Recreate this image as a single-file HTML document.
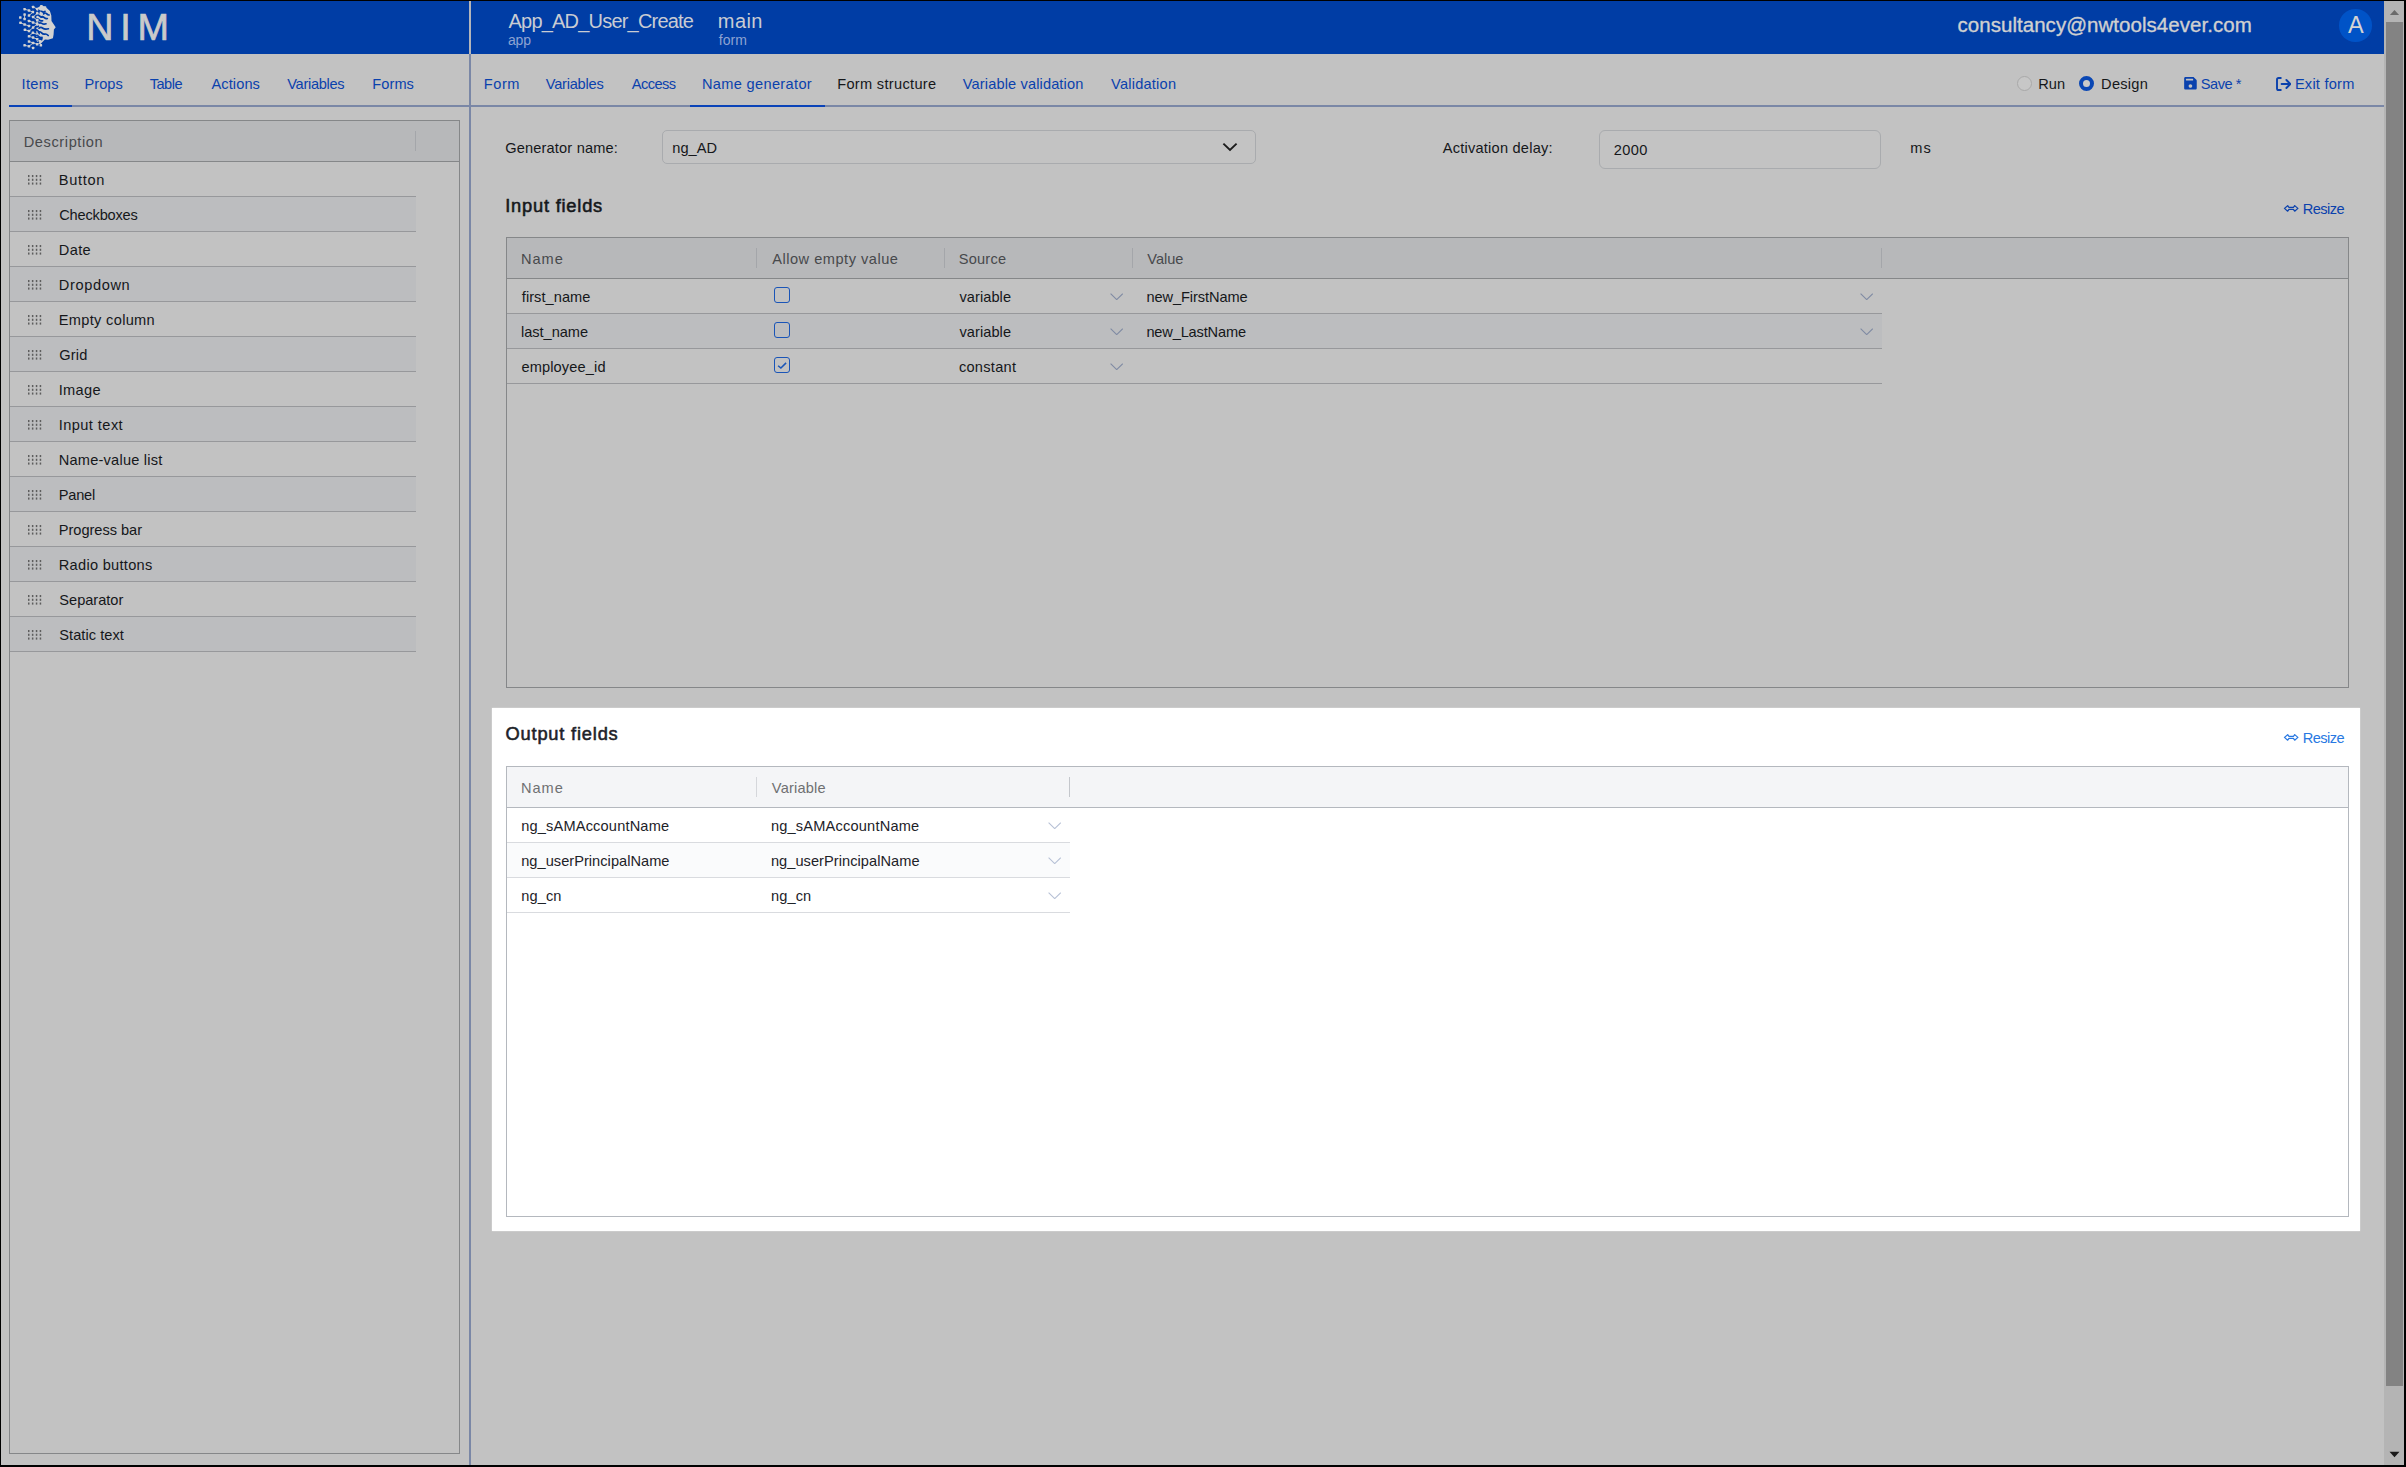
<!DOCTYPE html>
<html lang="en"><head><meta charset="utf-8"><title>NIM - App_AD_User_Create</title>
<style>
html,body{margin:0;padding:0;background:#000;}
body{width:2406px;height:1467px;position:relative;overflow:hidden;font-family:"Liberation Sans", sans-serif;}
.b{position:absolute;display:block;}
.t{position:absolute;white-space:pre;font-family:"Liberation Sans", sans-serif;}
</style></head><body>
<div class="b" style="left:0px;top:0px;width:2406px;height:1467px;background:#000;"></div>
<div class="b" style="left:1px;top:1px;width:2383px;height:1464px;background:#c2c2c2;"></div>
<div class="b" style="left:1px;top:1px;width:2383px;height:53px;background:#003da5;"></div>
<div class="b" style="left:2384px;top:1px;width:20px;height:1464px;background:#b4b4b4;"></div>
<div class="b" style="left:2386px;top:22px;width:17px;height:1364px;background:#838383;"></div>
<svg class="b" style="left:2389px;top:9px" width="11" height="7" viewBox="0 0 11 7"><path d="M0.9 6.0 L5.5 1.0 L10.1 6.0Z" fill="#6a6a6a"/></svg>
<svg class="b" style="left:2389px;top:1451px" width="11" height="7" viewBox="0 0 11 7"><path d="M0.5 0.8 L5.5 6.3 L10.5 0.8Z" fill="#1a1a1a"/></svg>
<div class="b" style="left:469px;top:1px;width:2px;height:53px;background:#b3b5ba;"></div>
<div class="b" style="left:469px;top:54px;width:2px;height:1411px;background:#7a87a6;"></div>
<div class="b" style="left:9px;top:105px;width:2375px;height:2px;background:#7a87a6;"></div>
<div class="b" style="left:9px;top:105px;width:62.5px;height:2.4px;background:#0a43b8;"></div>
<div class="b" style="left:689.5px;top:105px;width:135px;height:2.4px;background:#0a43b8;"></div>
<span class="t" style="left:86.21px;top:17.34px;font-size:37.7px;line-height:20px;color:#cacaca;letter-spacing:6.790px;-webkit-text-stroke:0.7px #cacaca;">NIM</span>
<span class="t" style="left:508.56px;top:10.77px;font-size:20px;line-height:20px;color:#c9ccd3;letter-spacing:-0.798px;">App_AD_User_Create</span>
<span class="t" style="left:508.01px;top:29.75px;font-size:14px;line-height:20px;color:#8da3d2;letter-spacing:-0.188px;">app</span>
<span class="t" style="left:717.87px;top:10.77px;font-size:20px;line-height:20px;color:#c9ccd3;letter-spacing:0.426px;">main</span>
<span class="t" style="left:718.70px;top:29.75px;font-size:14px;line-height:20px;color:#8da3d2;letter-spacing:0.074px;">form</span>
<span class="t" style="left:1957.53px;top:14.80px;font-size:20.5px;line-height:20px;color:#d0d0d0;letter-spacing:0.039px;-webkit-text-stroke:0.35px #d0d0d0;">consultancy@nwtools4ever.com</span>
<div class="b" style="left:2339.3px;top:9.2px;width:32.4px;height:32.4px;background:#0053c7;border-radius:50%;"></div>
<span class="t" style="left:2347.95px;top:15.06px;font-size:23.5px;line-height:20px;color:#d4d4d4;letter-spacing:0.000px;">A</span>
<span class="t" style="left:21.55px;top:73.74px;font-size:14.6px;line-height:20px;color:#0a41ad;letter-spacing:0.345px;">Items</span>
<span class="t" style="left:84.60px;top:73.74px;font-size:14.6px;line-height:20px;color:#0a41ad;letter-spacing:0.021px;">Props</span>
<span class="t" style="left:149.67px;top:73.74px;font-size:14.6px;line-height:20px;color:#0a41ad;letter-spacing:-0.486px;">Table</span>
<span class="t" style="left:211.47px;top:73.74px;font-size:14.6px;line-height:20px;color:#0a41ad;letter-spacing:0.096px;">Actions</span>
<span class="t" style="left:287.24px;top:73.74px;font-size:14.6px;line-height:20px;color:#0a41ad;letter-spacing:-0.297px;">Variables</span>
<span class="t" style="left:372.30px;top:73.74px;font-size:14.6px;line-height:20px;color:#0a41ad;letter-spacing:0.066px;">Forms</span>
<span class="t" style="left:483.80px;top:73.74px;font-size:14.6px;line-height:20px;color:#0a41ad;letter-spacing:0.533px;">Form</span>
<span class="t" style="left:545.74px;top:73.74px;font-size:14.6px;line-height:20px;color:#0a41ad;letter-spacing:-0.222px;">Variables</span>
<span class="t" style="left:631.87px;top:73.74px;font-size:14.6px;line-height:20px;color:#0a41ad;letter-spacing:-0.580px;">Access</span>
<span class="t" style="left:701.90px;top:73.74px;font-size:14.6px;line-height:20px;color:#0a41ad;letter-spacing:0.334px;">Name generator</span>
<span class="t" style="left:962.74px;top:73.74px;font-size:14.6px;line-height:20px;color:#0a41ad;letter-spacing:0.133px;">Variable validation</span>
<span class="t" style="left:1111.04px;top:73.74px;font-size:14.6px;line-height:20px;color:#0a41ad;letter-spacing:0.221px;">Validation</span>
<span class="t" style="left:837.20px;top:73.74px;font-size:14.6px;line-height:20px;color:#15171a;letter-spacing:0.310px;">Form structure</span>
<span class="t" style="left:2038.30px;top:73.74px;font-size:14.6px;line-height:20px;color:#15171a;letter-spacing:0.031px;">Run</span>
<span class="t" style="left:2101.10px;top:73.74px;font-size:14.6px;line-height:20px;color:#15171a;letter-spacing:0.260px;">Design</span>
<span class="t" style="left:2200.84px;top:73.74px;font-size:14.6px;line-height:20px;color:#0a41ad;letter-spacing:-0.485px;">Save *</span>
<span class="t" style="left:2294.90px;top:73.74px;font-size:14.6px;line-height:20px;color:#0a41ad;letter-spacing:0.233px;">Exit form</span>
<div class="b" style="left:2016.8px;top:76.1px;width:15.2px;height:15.2px;border:1px solid #a9a9a9;border-radius:50%;background:#c7c7c7;box-sizing:border-box;"></div>
<div class="b" style="left:2078.9px;top:76.1px;width:15.2px;height:15.2px;border:4.3px solid #0a47b4;border-radius:50%;background:#c9c9c9;box-sizing:border-box;"></div>
<svg class="b" style="left:2183.8px;top:77.3px" width="12.9" height="12.6" viewBox="0 0 448 448"><path fill="#0a41ad" d="M433.9 97.9L350.1 14.1C341.1 5.1 328.9 0 316.1 0H48C21.5 0 0 21.5 0 48v352c0 26.5 21.5 48 48 48h352c26.500 0 48-21.500 48-48V131.900c0-12.700-5.100-24.900-14.100-33.900zM224 384c-35.300 0-64-28.700-64-64s28.700-64 64-64 64 28.700 64 64-28.700 64-64 64zm96-272c0 8.800-7.200 16-16 16H80c-8.800 0-16-7.200-16-16V80c0-8.800 7.200-16 16-16h224c8.800 0 16 7.200 16 16z"/></svg>
<svg class="b" style="left:2275.6px;top:76.6px" width="15.6" height="14" viewBox="0 0 156 140" fill="none" stroke="#0a41ad" stroke-width="19" stroke-linecap="round" stroke-linejoin="round"><path d="M48 10H26Q10 10 10 26V114Q10 130 26 130H48"/><path d="M56 70H142M104 30L144 70L104 110"/></svg>
<div class="b" style="left:9px;top:120px;width:451px;height:1334px;border:1px solid #858789;box-sizing:border-box;"></div>
<div class="b" style="left:10px;top:121px;width:449px;height:40px;background:#b7b8ba;"></div>
<div class="b" style="left:10px;top:161px;width:449px;height:1px;background:#858789;"></div>
<div class="b" style="left:415px;top:131px;width:1px;height:20px;background:#a4a6aa;"></div>
<span class="t" style="left:23.70px;top:131.74px;font-size:14.6px;line-height:20px;color:#47494c;letter-spacing:0.602px;">Description</span>
<div class="b" style="left:10px;top:196px;width:406px;height:1px;background:#97989b;"></div>
<svg class="b" style="left:27.8px;top:175.2px" width="14" height="10" fill="#5e5e5e"><rect x="0.0" y="0.00" width="1.5" height="2.1"/><rect x="0.0" y="3.75" width="1.5" height="2.1"/><rect x="0.0" y="7.50" width="1.5" height="2.1"/><rect x="3.9" y="0.00" width="1.5" height="2.1"/><rect x="3.9" y="3.75" width="1.5" height="2.1"/><rect x="3.9" y="7.50" width="1.5" height="2.1"/><rect x="7.8" y="0.00" width="1.5" height="2.1"/><rect x="7.8" y="3.75" width="1.5" height="2.1"/><rect x="7.8" y="7.50" width="1.5" height="2.1"/><rect x="11.7" y="0.00" width="1.5" height="2.1"/><rect x="11.7" y="3.75" width="1.5" height="2.1"/><rect x="11.7" y="7.50" width="1.5" height="2.1"/></svg>
<span class="t" style="left:58.80px;top:169.94px;font-size:14.6px;line-height:20px;color:#15171a;letter-spacing:0.667px;">Button</span>
<div class="b" style="left:10px;top:197px;width:406px;height:34px;background:#bcbdbf;"></div>
<div class="b" style="left:10px;top:231px;width:406px;height:1px;background:#97989b;"></div>
<svg class="b" style="left:27.8px;top:210.2px" width="14" height="10" fill="#5e5e5e"><rect x="0.0" y="0.00" width="1.5" height="2.1"/><rect x="0.0" y="3.75" width="1.5" height="2.1"/><rect x="0.0" y="7.50" width="1.5" height="2.1"/><rect x="3.9" y="0.00" width="1.5" height="2.1"/><rect x="3.9" y="3.75" width="1.5" height="2.1"/><rect x="3.9" y="7.50" width="1.5" height="2.1"/><rect x="7.8" y="0.00" width="1.5" height="2.1"/><rect x="7.8" y="3.75" width="1.5" height="2.1"/><rect x="7.8" y="7.50" width="1.5" height="2.1"/><rect x="11.7" y="0.00" width="1.5" height="2.1"/><rect x="11.7" y="3.75" width="1.5" height="2.1"/><rect x="11.7" y="7.50" width="1.5" height="2.1"/></svg>
<span class="t" style="left:59.26px;top:204.94px;font-size:14.6px;line-height:20px;color:#15171a;letter-spacing:-0.197px;">Checkboxes</span>
<div class="b" style="left:10px;top:266px;width:406px;height:1px;background:#97989b;"></div>
<svg class="b" style="left:27.8px;top:245.2px" width="14" height="10" fill="#5e5e5e"><rect x="0.0" y="0.00" width="1.5" height="2.1"/><rect x="0.0" y="3.75" width="1.5" height="2.1"/><rect x="0.0" y="7.50" width="1.5" height="2.1"/><rect x="3.9" y="0.00" width="1.5" height="2.1"/><rect x="3.9" y="3.75" width="1.5" height="2.1"/><rect x="3.9" y="7.50" width="1.5" height="2.1"/><rect x="7.8" y="0.00" width="1.5" height="2.1"/><rect x="7.8" y="3.75" width="1.5" height="2.1"/><rect x="7.8" y="7.50" width="1.5" height="2.1"/><rect x="11.7" y="0.00" width="1.5" height="2.1"/><rect x="11.7" y="3.75" width="1.5" height="2.1"/><rect x="11.7" y="7.50" width="1.5" height="2.1"/></svg>
<span class="t" style="left:58.80px;top:239.94px;font-size:14.6px;line-height:20px;color:#15171a;letter-spacing:0.369px;">Date</span>
<div class="b" style="left:10px;top:267px;width:406px;height:34px;background:#bcbdbf;"></div>
<div class="b" style="left:10px;top:301px;width:406px;height:1px;background:#97989b;"></div>
<svg class="b" style="left:27.8px;top:280.2px" width="14" height="10" fill="#5e5e5e"><rect x="0.0" y="0.00" width="1.5" height="2.1"/><rect x="0.0" y="3.75" width="1.5" height="2.1"/><rect x="0.0" y="7.50" width="1.5" height="2.1"/><rect x="3.9" y="0.00" width="1.5" height="2.1"/><rect x="3.9" y="3.75" width="1.5" height="2.1"/><rect x="3.9" y="7.50" width="1.5" height="2.1"/><rect x="7.8" y="0.00" width="1.5" height="2.1"/><rect x="7.8" y="3.75" width="1.5" height="2.1"/><rect x="7.8" y="7.50" width="1.5" height="2.1"/><rect x="11.7" y="0.00" width="1.5" height="2.1"/><rect x="11.7" y="3.75" width="1.5" height="2.1"/><rect x="11.7" y="7.50" width="1.5" height="2.1"/></svg>
<span class="t" style="left:58.80px;top:274.94px;font-size:14.6px;line-height:20px;color:#15171a;letter-spacing:0.628px;">Dropdown</span>
<div class="b" style="left:10px;top:336px;width:406px;height:1px;background:#97989b;"></div>
<svg class="b" style="left:27.8px;top:315.2px" width="14" height="10" fill="#5e5e5e"><rect x="0.0" y="0.00" width="1.5" height="2.1"/><rect x="0.0" y="3.75" width="1.5" height="2.1"/><rect x="0.0" y="7.50" width="1.5" height="2.1"/><rect x="3.9" y="0.00" width="1.5" height="2.1"/><rect x="3.9" y="3.75" width="1.5" height="2.1"/><rect x="3.9" y="7.50" width="1.5" height="2.1"/><rect x="7.8" y="0.00" width="1.5" height="2.1"/><rect x="7.8" y="3.75" width="1.5" height="2.1"/><rect x="7.8" y="7.50" width="1.5" height="2.1"/><rect x="11.7" y="0.00" width="1.5" height="2.1"/><rect x="11.7" y="3.75" width="1.5" height="2.1"/><rect x="11.7" y="7.50" width="1.5" height="2.1"/></svg>
<span class="t" style="left:58.80px;top:309.94px;font-size:14.6px;line-height:20px;color:#15171a;letter-spacing:0.313px;">Empty column</span>
<div class="b" style="left:10px;top:337px;width:406px;height:34px;background:#bcbdbf;"></div>
<div class="b" style="left:10px;top:371px;width:406px;height:1px;background:#97989b;"></div>
<svg class="b" style="left:27.8px;top:350.2px" width="14" height="10" fill="#5e5e5e"><rect x="0.0" y="0.00" width="1.5" height="2.1"/><rect x="0.0" y="3.75" width="1.5" height="2.1"/><rect x="0.0" y="7.50" width="1.5" height="2.1"/><rect x="3.9" y="0.00" width="1.5" height="2.1"/><rect x="3.9" y="3.75" width="1.5" height="2.1"/><rect x="3.9" y="7.50" width="1.5" height="2.1"/><rect x="7.8" y="0.00" width="1.5" height="2.1"/><rect x="7.8" y="3.75" width="1.5" height="2.1"/><rect x="7.8" y="7.50" width="1.5" height="2.1"/><rect x="11.7" y="0.00" width="1.5" height="2.1"/><rect x="11.7" y="3.75" width="1.5" height="2.1"/><rect x="11.7" y="7.50" width="1.5" height="2.1"/></svg>
<span class="t" style="left:59.27px;top:344.94px;font-size:14.6px;line-height:20px;color:#15171a;letter-spacing:0.165px;">Grid</span>
<div class="b" style="left:10px;top:406px;width:406px;height:1px;background:#97989b;"></div>
<svg class="b" style="left:27.8px;top:385.2px" width="14" height="10" fill="#5e5e5e"><rect x="0.0" y="0.00" width="1.5" height="2.1"/><rect x="0.0" y="3.75" width="1.5" height="2.1"/><rect x="0.0" y="7.50" width="1.5" height="2.1"/><rect x="3.9" y="0.00" width="1.5" height="2.1"/><rect x="3.9" y="3.75" width="1.5" height="2.1"/><rect x="3.9" y="7.50" width="1.5" height="2.1"/><rect x="7.8" y="0.00" width="1.5" height="2.1"/><rect x="7.8" y="3.75" width="1.5" height="2.1"/><rect x="7.8" y="7.50" width="1.5" height="2.1"/><rect x="11.7" y="0.00" width="1.5" height="2.1"/><rect x="11.7" y="3.75" width="1.5" height="2.1"/><rect x="11.7" y="7.50" width="1.5" height="2.1"/></svg>
<span class="t" style="left:58.65px;top:379.94px;font-size:14.6px;line-height:20px;color:#15171a;letter-spacing:0.380px;">Image</span>
<div class="b" style="left:10px;top:407px;width:406px;height:34px;background:#bcbdbf;"></div>
<div class="b" style="left:10px;top:441px;width:406px;height:1px;background:#97989b;"></div>
<svg class="b" style="left:27.8px;top:420.2px" width="14" height="10" fill="#5e5e5e"><rect x="0.0" y="0.00" width="1.5" height="2.1"/><rect x="0.0" y="3.75" width="1.5" height="2.1"/><rect x="0.0" y="7.50" width="1.5" height="2.1"/><rect x="3.9" y="0.00" width="1.5" height="2.1"/><rect x="3.9" y="3.75" width="1.5" height="2.1"/><rect x="3.9" y="7.50" width="1.5" height="2.1"/><rect x="7.8" y="0.00" width="1.5" height="2.1"/><rect x="7.8" y="3.75" width="1.5" height="2.1"/><rect x="7.8" y="7.50" width="1.5" height="2.1"/><rect x="11.7" y="0.00" width="1.5" height="2.1"/><rect x="11.7" y="3.75" width="1.5" height="2.1"/><rect x="11.7" y="7.50" width="1.5" height="2.1"/></svg>
<span class="t" style="left:58.65px;top:414.94px;font-size:14.6px;line-height:20px;color:#15171a;letter-spacing:0.444px;">Input text</span>
<div class="b" style="left:10px;top:476px;width:406px;height:1px;background:#97989b;"></div>
<svg class="b" style="left:27.8px;top:455.2px" width="14" height="10" fill="#5e5e5e"><rect x="0.0" y="0.00" width="1.5" height="2.1"/><rect x="0.0" y="3.75" width="1.5" height="2.1"/><rect x="0.0" y="7.50" width="1.5" height="2.1"/><rect x="3.9" y="0.00" width="1.5" height="2.1"/><rect x="3.9" y="3.75" width="1.5" height="2.1"/><rect x="3.9" y="7.50" width="1.5" height="2.1"/><rect x="7.8" y="0.00" width="1.5" height="2.1"/><rect x="7.8" y="3.75" width="1.5" height="2.1"/><rect x="7.8" y="7.50" width="1.5" height="2.1"/><rect x="11.7" y="0.00" width="1.5" height="2.1"/><rect x="11.7" y="3.75" width="1.5" height="2.1"/><rect x="11.7" y="7.50" width="1.5" height="2.1"/></svg>
<span class="t" style="left:58.80px;top:449.94px;font-size:14.6px;line-height:20px;color:#15171a;letter-spacing:0.207px;">Name-value list</span>
<div class="b" style="left:10px;top:477px;width:406px;height:34px;background:#bcbdbf;"></div>
<div class="b" style="left:10px;top:511px;width:406px;height:1px;background:#97989b;"></div>
<svg class="b" style="left:27.8px;top:490.2px" width="14" height="10" fill="#5e5e5e"><rect x="0.0" y="0.00" width="1.5" height="2.1"/><rect x="0.0" y="3.75" width="1.5" height="2.1"/><rect x="0.0" y="7.50" width="1.5" height="2.1"/><rect x="3.9" y="0.00" width="1.5" height="2.1"/><rect x="3.9" y="3.75" width="1.5" height="2.1"/><rect x="3.9" y="7.50" width="1.5" height="2.1"/><rect x="7.8" y="0.00" width="1.5" height="2.1"/><rect x="7.8" y="3.75" width="1.5" height="2.1"/><rect x="7.8" y="7.50" width="1.5" height="2.1"/><rect x="11.7" y="0.00" width="1.5" height="2.1"/><rect x="11.7" y="3.75" width="1.5" height="2.1"/><rect x="11.7" y="7.50" width="1.5" height="2.1"/></svg>
<span class="t" style="left:58.80px;top:484.94px;font-size:14.6px;line-height:20px;color:#15171a;letter-spacing:-0.242px;">Panel</span>
<div class="b" style="left:10px;top:546px;width:406px;height:1px;background:#97989b;"></div>
<svg class="b" style="left:27.8px;top:525.2px" width="14" height="10" fill="#5e5e5e"><rect x="0.0" y="0.00" width="1.5" height="2.1"/><rect x="0.0" y="3.75" width="1.5" height="2.1"/><rect x="0.0" y="7.50" width="1.5" height="2.1"/><rect x="3.9" y="0.00" width="1.5" height="2.1"/><rect x="3.9" y="3.75" width="1.5" height="2.1"/><rect x="3.9" y="7.50" width="1.5" height="2.1"/><rect x="7.8" y="0.00" width="1.5" height="2.1"/><rect x="7.8" y="3.75" width="1.5" height="2.1"/><rect x="7.8" y="7.50" width="1.5" height="2.1"/><rect x="11.7" y="0.00" width="1.5" height="2.1"/><rect x="11.7" y="3.75" width="1.5" height="2.1"/><rect x="11.7" y="7.50" width="1.5" height="2.1"/></svg>
<span class="t" style="left:58.80px;top:519.94px;font-size:14.6px;line-height:20px;color:#15171a;letter-spacing:-0.031px;">Progress bar</span>
<div class="b" style="left:10px;top:547px;width:406px;height:34px;background:#bcbdbf;"></div>
<div class="b" style="left:10px;top:581px;width:406px;height:1px;background:#97989b;"></div>
<svg class="b" style="left:27.8px;top:560.2px" width="14" height="10" fill="#5e5e5e"><rect x="0.0" y="0.00" width="1.5" height="2.1"/><rect x="0.0" y="3.75" width="1.5" height="2.1"/><rect x="0.0" y="7.50" width="1.5" height="2.1"/><rect x="3.9" y="0.00" width="1.5" height="2.1"/><rect x="3.9" y="3.75" width="1.5" height="2.1"/><rect x="3.9" y="7.50" width="1.5" height="2.1"/><rect x="7.8" y="0.00" width="1.5" height="2.1"/><rect x="7.8" y="3.75" width="1.5" height="2.1"/><rect x="7.8" y="7.50" width="1.5" height="2.1"/><rect x="11.7" y="0.00" width="1.5" height="2.1"/><rect x="11.7" y="3.75" width="1.5" height="2.1"/><rect x="11.7" y="7.50" width="1.5" height="2.1"/></svg>
<span class="t" style="left:58.80px;top:554.94px;font-size:14.6px;line-height:20px;color:#15171a;letter-spacing:0.286px;">Radio buttons</span>
<div class="b" style="left:10px;top:616px;width:406px;height:1px;background:#97989b;"></div>
<svg class="b" style="left:27.8px;top:595.2px" width="14" height="10" fill="#5e5e5e"><rect x="0.0" y="0.00" width="1.5" height="2.1"/><rect x="0.0" y="3.75" width="1.5" height="2.1"/><rect x="0.0" y="7.50" width="1.5" height="2.1"/><rect x="3.9" y="0.00" width="1.5" height="2.1"/><rect x="3.9" y="3.75" width="1.5" height="2.1"/><rect x="3.9" y="7.50" width="1.5" height="2.1"/><rect x="7.8" y="0.00" width="1.5" height="2.1"/><rect x="7.8" y="3.75" width="1.5" height="2.1"/><rect x="7.8" y="7.50" width="1.5" height="2.1"/><rect x="11.7" y="0.00" width="1.5" height="2.1"/><rect x="11.7" y="3.75" width="1.5" height="2.1"/><rect x="11.7" y="7.50" width="1.5" height="2.1"/></svg>
<span class="t" style="left:59.34px;top:589.94px;font-size:14.6px;line-height:20px;color:#15171a;letter-spacing:-0.014px;">Separator</span>
<div class="b" style="left:10px;top:617px;width:406px;height:34px;background:#bcbdbf;"></div>
<div class="b" style="left:10px;top:651px;width:406px;height:1px;background:#97989b;"></div>
<svg class="b" style="left:27.8px;top:630.2px" width="14" height="10" fill="#5e5e5e"><rect x="0.0" y="0.00" width="1.5" height="2.1"/><rect x="0.0" y="3.75" width="1.5" height="2.1"/><rect x="0.0" y="7.50" width="1.5" height="2.1"/><rect x="3.9" y="0.00" width="1.5" height="2.1"/><rect x="3.9" y="3.75" width="1.5" height="2.1"/><rect x="3.9" y="7.50" width="1.5" height="2.1"/><rect x="7.8" y="0.00" width="1.5" height="2.1"/><rect x="7.8" y="3.75" width="1.5" height="2.1"/><rect x="7.8" y="7.50" width="1.5" height="2.1"/><rect x="11.7" y="0.00" width="1.5" height="2.1"/><rect x="11.7" y="3.75" width="1.5" height="2.1"/><rect x="11.7" y="7.50" width="1.5" height="2.1"/></svg>
<span class="t" style="left:59.34px;top:624.94px;font-size:14.6px;line-height:20px;color:#15171a;letter-spacing:0.047px;">Static text</span>
<span class="t" style="left:505.17px;top:138.24px;font-size:14.6px;line-height:20px;color:#15171a;letter-spacing:0.171px;">Generator name:</span>
<div class="b" style="left:662px;top:130.3px;width:594px;height:33.4px;border:1px solid #a9abae;border-radius:5px;box-sizing:border-box;background:#c3c3c3;"></div>
<span class="t" style="left:672.23px;top:138.24px;font-size:14.6px;line-height:20px;color:#15171a;letter-spacing:0.057px;">ng_AD</span>
<svg class="b" style="left:1222px;top:142px" width="16" height="10" viewBox="0 0 16 10" fill="none" stroke="#1b1b1b" stroke-width="1.9"><path d="M1.4 1.6 L8 8 L14.6 1.6"/></svg>
<span class="t" style="left:1442.77px;top:137.94px;font-size:14.6px;line-height:20px;color:#15171a;letter-spacing:0.222px;">Activation delay:</span>
<div class="b" style="left:1599px;top:130px;width:282px;height:38.6px;border:1px solid #a9abae;border-radius:6px;box-sizing:border-box;background:#c3c3c3;"></div>
<span class="t" style="left:1613.67px;top:139.64px;font-size:14.6px;line-height:20px;color:#15171a;letter-spacing:0.442px;">2000</span>
<span class="t" style="left:1910.33px;top:137.84px;font-size:14.6px;line-height:20px;color:#15171a;letter-spacing:0.935px;">ms</span>
<span class="t" style="left:505.21px;top:195.66px;font-size:18.3px;line-height:20px;color:#15171a;letter-spacing:0.786px;-webkit-text-stroke:0.55px #15171a;">Input fields</span>
<svg class="b" style="left:2283.3px;top:204.0px" width="16.4" height="8.8" viewBox="0 0 16.4 8.8" fill="none" stroke="#0a41ad" stroke-width="1.25" stroke-linejoin="round"><path d="M1.5 4.4 L4.7 1.6 L6.0 3.5 L10.4 3.5 L11.7 1.6 L14.9 4.4 L11.7 7.2 L10.4 5.3 L6.0 5.3 L4.7 7.2 Z"/></svg>
<span class="t" style="left:2302.70px;top:198.84px;font-size:14.6px;line-height:20px;color:#0a41ad;letter-spacing:-0.536px;">Resize</span>
<div class="b" style="left:506px;top:237px;width:1843px;height:451px;border:1px solid #858789;box-sizing:border-box;"></div>
<div class="b" style="left:507px;top:238px;width:1841px;height:40px;background:#b7b8ba;"></div>
<div class="b" style="left:507px;top:278px;width:1841px;height:1px;background:#858789;"></div>
<div class="b" style="left:756px;top:248px;width:1px;height:20px;background:#a4a6aa;"></div>
<div class="b" style="left:944px;top:248px;width:1px;height:20px;background:#a4a6aa;"></div>
<div class="b" style="left:1131.5px;top:248px;width:1px;height:20px;background:#a4a6aa;"></div>
<div class="b" style="left:1881px;top:248px;width:1px;height:20px;background:#a4a6aa;"></div>
<span class="t" style="left:521.10px;top:249.04px;font-size:14.6px;line-height:20px;color:#47494c;letter-spacing:0.934px;">Name</span>
<span class="t" style="left:772.27px;top:249.04px;font-size:14.6px;line-height:20px;color:#47494c;letter-spacing:0.501px;">Allow empty value</span>
<span class="t" style="left:958.84px;top:249.04px;font-size:14.6px;line-height:20px;color:#47494c;letter-spacing:0.190px;">Source</span>
<span class="t" style="left:1147.34px;top:249.04px;font-size:14.6px;line-height:20px;color:#47494c;letter-spacing:-0.032px;">Value</span>
<div class="b" style="left:507px;top:313px;width:1375px;height:1px;background:#97989b;"></div>
<span class="t" style="left:521.79px;top:287.14px;font-size:14.6px;line-height:20px;color:#15171a;letter-spacing:0.055px;">first_name</span>
<div class="b" style="left:773.9px;top:286.9px;width:16.5px;height:16.6px;border:1.5px solid #1a55b7;border-radius:3px;box-sizing:border-box;"></div>
<span class="t" style="left:959.45px;top:287.14px;font-size:14.6px;line-height:20px;color:#15171a;letter-spacing:0.067px;">variable</span>
<svg class="b" style="left:1109.8px;top:292.9px" width="13.4" height="7.6" viewBox="0 0 13.4 7.6" fill="none" stroke="#7f8aa3" stroke-width="1.1"><path d="M0.6 0.7 L6.7 6.6 L12.8 0.7"/></svg>
<span class="t" style="left:1146.43px;top:287.14px;font-size:14.6px;line-height:20px;color:#15171a;letter-spacing:-0.076px;">new_FirstName</span>
<svg class="b" style="left:1859.6px;top:292.9px" width="13.4" height="7.6" viewBox="0 0 13.4 7.6" fill="none" stroke="#7f8aa3" stroke-width="1.1"><path d="M0.6 0.7 L6.7 6.6 L12.8 0.7"/></svg>
<div class="b" style="left:507px;top:314px;width:1375px;height:34px;background:#bcbdbf;"></div>
<div class="b" style="left:507px;top:348px;width:1375px;height:1px;background:#97989b;"></div>
<span class="t" style="left:521.02px;top:322.14px;font-size:14.6px;line-height:20px;color:#15171a;letter-spacing:-0.041px;">last_name</span>
<div class="b" style="left:773.9px;top:321.9px;width:16.5px;height:16.6px;border:1.5px solid #1a55b7;border-radius:3px;box-sizing:border-box;"></div>
<span class="t" style="left:959.45px;top:322.14px;font-size:14.6px;line-height:20px;color:#15171a;letter-spacing:0.067px;">variable</span>
<svg class="b" style="left:1109.8px;top:327.9px" width="13.4" height="7.6" viewBox="0 0 13.4 7.6" fill="none" stroke="#7f8aa3" stroke-width="1.1"><path d="M0.6 0.7 L6.7 6.6 L12.8 0.7"/></svg>
<span class="t" style="left:1146.43px;top:322.14px;font-size:14.6px;line-height:20px;color:#15171a;letter-spacing:-0.166px;">new_LastName</span>
<svg class="b" style="left:1859.6px;top:327.9px" width="13.4" height="7.6" viewBox="0 0 13.4 7.6" fill="none" stroke="#7f8aa3" stroke-width="1.1"><path d="M0.6 0.7 L6.7 6.6 L12.8 0.7"/></svg>
<div class="b" style="left:507px;top:383px;width:1375px;height:1px;background:#97989b;"></div>
<span class="t" style="left:521.38px;top:357.14px;font-size:14.6px;line-height:20px;color:#15171a;letter-spacing:0.147px;">employee_id</span>
<div class="b" style="left:773.9px;top:356.9px;width:16.5px;height:16.6px;border:1.5px solid #1a55b7;border-radius:3px;box-sizing:border-box;"></div>
<svg class="b" style="left:773.9px;top:356.9px" width="16.5" height="16.6" viewBox="0 0 16.5 16.6" fill="none" stroke="#1a55b7" stroke-width="1.5"><path d="M4.1 8.7 L6.9 11.1 L12.1 5.9"/></svg>
<span class="t" style="left:958.88px;top:357.14px;font-size:14.6px;line-height:20px;color:#15171a;letter-spacing:0.291px;">constant</span>
<svg class="b" style="left:1109.8px;top:362.9px" width="13.4" height="7.6" viewBox="0 0 13.4 7.6" fill="none" stroke="#7f8aa3" stroke-width="1.1"><path d="M0.6 0.7 L6.7 6.6 L12.8 0.7"/></svg>
<div class="b" style="left:491.6px;top:707.5px;width:1868.6px;height:523.1px;background:#fff;box-shadow:0 0 1.5px rgba(255,255,255,.6);"></div>
<span class="t" style="left:505.53px;top:724.26px;font-size:18.3px;line-height:20px;color:#1d2228;letter-spacing:0.799px;-webkit-text-stroke:0.55px #1d2228;">Output fields</span>
<svg class="b" style="left:2283.3px;top:733.4px" width="16.4" height="8.8" viewBox="0 0 16.4 8.8" fill="none" stroke="#2878e2" stroke-width="1.25" stroke-linejoin="round"><path d="M1.5 4.4 L4.7 1.6 L6.0 3.5 L10.4 3.5 L11.7 1.6 L14.9 4.4 L11.7 7.2 L10.4 5.3 L6.0 5.3 L4.7 7.2 Z"/></svg>
<span class="t" style="left:2302.70px;top:728.24px;font-size:14.6px;line-height:20px;color:#2878e2;letter-spacing:-0.536px;">Resize</span>
<div class="b" style="left:506px;top:766px;width:1843px;height:451px;border:1px solid #b4b8be;box-sizing:border-box;"></div>
<div class="b" style="left:507px;top:767px;width:1841px;height:40px;background:#f4f5f7;"></div>
<div class="b" style="left:507px;top:807px;width:1841px;height:1px;background:#b4b8be;"></div>
<div class="b" style="left:756px;top:777px;width:1px;height:20px;background:#d5d7db;"></div>
<div class="b" style="left:1068.5px;top:777px;width:1.6px;height:20px;background:#c4c7cc;"></div>
<span class="t" style="left:521.10px;top:777.94px;font-size:14.6px;line-height:20px;color:#6f7072;letter-spacing:0.934px;">Name</span>
<span class="t" style="left:771.84px;top:777.94px;font-size:14.6px;line-height:20px;color:#6f7072;letter-spacing:0.192px;">Variable</span>
<div class="b" style="left:507px;top:842px;width:563px;height:1px;background:#d9dbdf;"></div>
<span class="t" style="left:521.23px;top:815.69px;font-size:14.6px;line-height:20px;color:#1d2228;letter-spacing:0.166px;">ng_sAMAccountName</span>
<span class="t" style="left:770.93px;top:815.69px;font-size:14.6px;line-height:20px;color:#1d2228;letter-spacing:0.191px;">ng_sAMAccountName</span>
<svg class="b" style="left:1047.6px;top:821.6px" width="13.4" height="7.6" viewBox="0 0 13.4 7.6" fill="none" stroke="#b7c1d6" stroke-width="1.1"><path d="M0.6 0.7 L6.7 6.6 L12.8 0.7"/></svg>
<div class="b" style="left:507px;top:843px;width:563px;height:34px;background:#fafbfc;"></div>
<div class="b" style="left:507px;top:877px;width:563px;height:1px;background:#d9dbdf;"></div>
<span class="t" style="left:521.23px;top:850.69px;font-size:14.6px;line-height:20px;color:#1d2228;letter-spacing:0.033px;">ng_userPrincipalName</span>
<span class="t" style="left:770.93px;top:850.69px;font-size:14.6px;line-height:20px;color:#1d2228;letter-spacing:0.054px;">ng_userPrincipalName</span>
<svg class="b" style="left:1047.6px;top:856.6px" width="13.4" height="7.6" viewBox="0 0 13.4 7.6" fill="none" stroke="#b7c1d6" stroke-width="1.1"><path d="M0.6 0.7 L6.7 6.6 L12.8 0.7"/></svg>
<div class="b" style="left:507px;top:912px;width:563px;height:1px;background:#d9dbdf;"></div>
<span class="t" style="left:521.23px;top:885.69px;font-size:14.6px;line-height:20px;color:#1d2228;letter-spacing:0.110px;">ng_cn</span>
<span class="t" style="left:770.93px;top:885.69px;font-size:14.6px;line-height:20px;color:#1d2228;letter-spacing:0.135px;">ng_cn</span>
<svg class="b" style="left:1047.6px;top:891.6px" width="13.4" height="7.6" viewBox="0 0 13.4 7.6" fill="none" stroke="#b7c1d6" stroke-width="1.1"><path d="M0.6 0.7 L6.7 6.6 L12.8 0.7"/></svg>
<svg class="b" style="left:0;top:0" width="60" height="54" viewBox="0 0 60 54"><path fill="#d2d2d2" d="M37.0 8.2 L39.5 6.4 L42.2 5.6 L45.9 7.2 L49.9 10.9 L51.3 15.6 L51.5 21.1 L55.7 27.3 L53.9 29.4 L53.6 34.4 L52.9 38.2 L48.1 39.7 L44.9 39.4 L42.2 42.2 L40.2 44.2 L37.6 43.2 L36.2 40 L36.4 30 L36.2 20 Z"/><path d="M38.6 11.4 q1.6 -1.4 3.2 0 t3.2 0" fill="none" stroke="#003da5" stroke-width="1.7" stroke-linecap="round"/><path d="M43.6 13.9 q1.4 -1.7 2.9 -0.2 t2.6 1.3" fill="none" stroke="#003da5" stroke-width="1.7" stroke-linecap="round"/><path d="M36.0 15.2 q2 -0.8 3.4 0.6 t3.2 0.8" fill="none" stroke="#003da5" stroke-width="1.7" stroke-linecap="round"/><path d="M41.2 17.2 q1.7 -1.0 3.1 0.4 t3.0 0.9" fill="none" stroke="#003da5" stroke-width="1.7" stroke-linecap="round"/><path d="M35.8 19.0 q2 -0.6 3.2 0.9 t3.6 0.9" fill="none" stroke="#003da5" stroke-width="1.7" stroke-linecap="round"/><path d="M38.2 23.4 q1.8 -1.2 3.6 0 t4.2 0.4" fill="none" stroke="#003da5" stroke-width="1.7" stroke-linecap="round"/><path d="M34.2 26.0 q2 1.6 4.2 0.2" fill="none" stroke="#003da5" stroke-width="1.7" stroke-linecap="round"/><path d="M39.0 28.2 q1.8 -1.5 3.8 0 t5.6 0.6" fill="none" stroke="#003da5" stroke-width="1.7" stroke-linecap="round"/><path d="M34.6 30.4 q1.8 -1.4 3.4 0.4 t1.2 2.8" fill="none" stroke="#003da5" stroke-width="1.7" stroke-linecap="round"/><path d="M38.4 32.0 q1.6 -0.8 3.2 0.9 t3.2 1.2 t3.4 1.4" fill="none" stroke="#003da5" stroke-width="1.7" stroke-linecap="round"/><path d="M34.8 35.0 q2.2 -0.4 3.6 1.2 t3.6 1.2" fill="none" stroke="#003da5" stroke-width="1.7" stroke-linecap="round"/><path d="M34.6 39.9 q2 0.8 3.6 -0.4 t3.4 0.2" fill="none" stroke="#003da5" stroke-width="1.7" stroke-linecap="round"/><path d="M35 41.8 q1.6 1.2 3.4 0.4" fill="none" stroke="#003da5" stroke-width="1.7" stroke-linecap="round"/><path d="M36.2 12.6 q1.4 -1.0 2.8 0.2" fill="none" stroke="#003da5" stroke-width="1.7" stroke-linecap="round"/><path d="M36.0 22.0 q1.2 -0.8 2.4 0.3" fill="none" stroke="#003da5" stroke-width="1.7" stroke-linecap="round"/><path d="M36.4 37.6 q1.6 -0.6 3.0 0.6 t2.6 0.4" fill="none" stroke="#003da5" stroke-width="1.7" stroke-linecap="round"/><path d="M36.0 9.8 q1.2 -0.9 2.4 0.1" fill="none" stroke="#003da5" stroke-width="1.7" stroke-linecap="round"/><path d="M24.6 9.2 L29 10.5" stroke="#d2d2d2" stroke-width="0.95" fill="none" opacity="0.95"/><path d="M32.9 12.1 L29 15.6" stroke="#d2d2d2" stroke-width="0.95" fill="none" opacity="0.95"/><path d="M24.6 14.6 L24.6 19" stroke="#d2d2d2" stroke-width="0.95" fill="none" opacity="0.95"/><path d="M29 20.9 L33.1 22.5" stroke="#d2d2d2" stroke-width="0.95" fill="none" opacity="0.95"/><path d="M33.1 22.5 L37.2 23.8" stroke="#d2d2d2" stroke-width="0.95" fill="none" opacity="0.95"/><path d="M37.2 23.8 L37.2 20" stroke="#d2d2d2" stroke-width="0.95" fill="none" opacity="0.95"/><path d="M20.5 22.8 L24.6 24.5" stroke="#d2d2d2" stroke-width="0.95" fill="none" opacity="0.95"/><path d="M24.6 24.5 L29 25.9" stroke="#d2d2d2" stroke-width="0.95" fill="none" opacity="0.95"/><path d="M24.9 29.8 L29 31" stroke="#d2d2d2" stroke-width="0.95" fill="none" opacity="0.95"/><path d="M29 31 L33.1 27.6" stroke="#d2d2d2" stroke-width="0.95" fill="none" opacity="0.95"/><path d="M29 36.3 L33.1 37.6" stroke="#d2d2d2" stroke-width="0.95" fill="none" opacity="0.95"/><path d="M33.1 37.6 L37.2 39.2" stroke="#d2d2d2" stroke-width="0.95" fill="none" opacity="0.95"/><path d="M29 41.5 L33.1 42.9" stroke="#d2d2d2" stroke-width="0.95" fill="none" opacity="0.95"/><path d="M33.1 42.9 L37.2 44.3" stroke="#d2d2d2" stroke-width="0.95" fill="none" opacity="0.95"/><path d="M24.6 45.3 L29 46.3" stroke="#d2d2d2" stroke-width="0.95" fill="none" opacity="0.95"/><path d="M29 46.3 L33.1 42.9" stroke="#d2d2d2" stroke-width="0.95" fill="none" opacity="0.95"/><path d="M33.1 17 L37.2 20" stroke="#d2d2d2" stroke-width="0.95" fill="none" opacity="0.95"/><path d="M32.9 32.7 L29 36.3" stroke="#d2d2d2" stroke-width="0.95" fill="none" opacity="0.95"/><path d="M33.1 6.9 L37.2 9.0" stroke="#d2d2d2" stroke-width="0.95" fill="none" opacity="0.95"/><path d="M37.2 13.3 L33.1 17" stroke="#d2d2d2" stroke-width="0.95" fill="none" opacity="0.95"/><path d="M33.1 27.6 L37.2 23.8" stroke="#d2d2d2" stroke-width="0.95" fill="none" opacity="0.95"/><path d="M32.9 32.7 L37.2 34.5" stroke="#d2d2d2" stroke-width="0.95" fill="none" opacity="0.95"/><path d="M29 10.5 L32.9 12.1" stroke="#d2d2d2" stroke-width="0.95" fill="none" opacity="0.95"/><rect x="31.85" y="5.65" width="2.5" height="2.5" rx="0.6" fill="#d2d2d2"/><rect x="23.35" y="7.95" width="2.5" height="2.5" rx="0.6" fill="#d2d2d2"/><rect x="27.75" y="9.25" width="2.5" height="2.5" rx="0.6" fill="#d2d2d2"/><rect x="31.65" y="10.85" width="2.5" height="2.5" rx="0.6" fill="#d2d2d2"/><rect x="27.75" y="14.35" width="2.5" height="2.5" rx="0.6" fill="#d2d2d2"/><rect x="23.35" y="13.35" width="2.5" height="2.5" rx="0.6" fill="#d2d2d2"/><rect x="23.35" y="17.75" width="2.5" height="2.5" rx="0.6" fill="#d2d2d2"/><rect x="19.05" y="16.25" width="2.5" height="2.5" rx="0.6" fill="#d2d2d2"/><rect x="35.95" y="12.05" width="2.5" height="2.5" rx="0.6" fill="#d2d2d2"/><rect x="31.85" y="15.75" width="2.5" height="2.5" rx="0.6" fill="#d2d2d2"/><rect x="27.75" y="19.65" width="2.5" height="2.5" rx="0.6" fill="#d2d2d2"/><rect x="31.85" y="21.25" width="2.5" height="2.5" rx="0.6" fill="#d2d2d2"/><rect x="35.95" y="22.55" width="2.5" height="2.5" rx="0.6" fill="#d2d2d2"/><rect x="35.95" y="18.75" width="2.5" height="2.5" rx="0.6" fill="#d2d2d2"/><rect x="19.25" y="21.55" width="2.5" height="2.5" rx="0.6" fill="#d2d2d2"/><rect x="23.35" y="23.25" width="2.5" height="2.5" rx="0.6" fill="#d2d2d2"/><rect x="27.75" y="24.65" width="2.5" height="2.5" rx="0.6" fill="#d2d2d2"/><rect x="31.85" y="26.35" width="2.5" height="2.5" rx="0.6" fill="#d2d2d2"/><rect x="23.65" y="28.55" width="2.5" height="2.5" rx="0.6" fill="#d2d2d2"/><rect x="27.75" y="29.75" width="2.5" height="2.5" rx="0.6" fill="#d2d2d2"/><rect x="31.65" y="31.45" width="2.5" height="2.5" rx="0.6" fill="#d2d2d2"/><rect x="27.75" y="35.05" width="2.5" height="2.5" rx="0.6" fill="#d2d2d2"/><rect x="31.85" y="36.35" width="2.5" height="2.5" rx="0.6" fill="#d2d2d2"/><rect x="35.95" y="37.95" width="2.5" height="2.5" rx="0.6" fill="#d2d2d2"/><rect x="27.75" y="40.25" width="2.5" height="2.5" rx="0.6" fill="#d2d2d2"/><rect x="31.85" y="41.65" width="2.5" height="2.5" rx="0.6" fill="#d2d2d2"/><rect x="35.95" y="43.05" width="2.5" height="2.5" rx="0.6" fill="#d2d2d2"/><rect x="23.35" y="44.05" width="2.5" height="2.5" rx="0.6" fill="#d2d2d2"/><rect x="27.75" y="45.05" width="2.5" height="2.5" rx="0.6" fill="#d2d2d2"/><rect x="31.85" y="46.65" width="2.5" height="2.5" rx="0.6" fill="#d2d2d2"/><rect x="39.65" y="44.05" width="2.5" height="2.5" rx="0.6" fill="#d2d2d2"/><rect x="39.65" y="7.95" width="2.5" height="2.5" rx="0.6" fill="#d2d2d2"/><rect x="40.05" y="4.95" width="2.5" height="2.5" rx="0.6" fill="#d2d2d2"/><rect x="43.75" y="6.35" width="2.5" height="2.5" rx="0.6" fill="#d2d2d2"/><rect x="35.95" y="7.75" width="2.5" height="2.5" rx="0.6" fill="#d2d2d2"/></svg>
</body></html>
